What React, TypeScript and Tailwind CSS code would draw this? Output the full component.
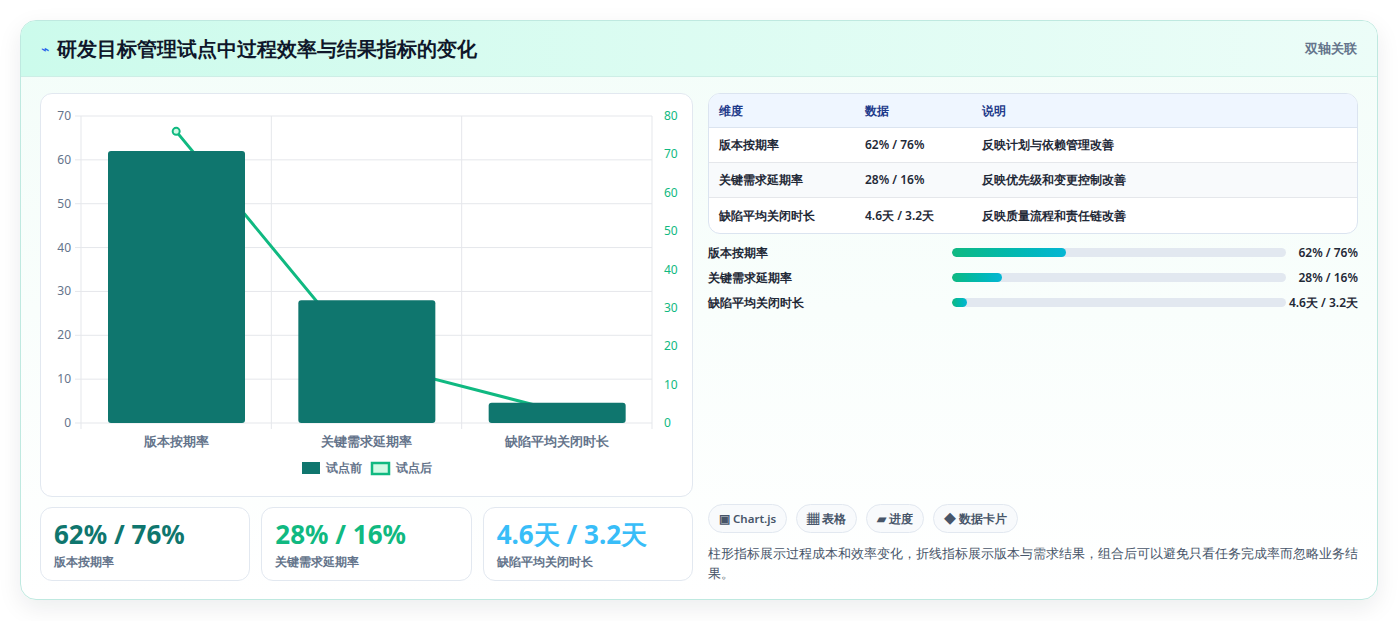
const font = "font-['Inter','Noto_Sans_CJK_SC',sans-serif]";

const rows = [
  { k: "版本按期率", v: "62% / 76%", d: "反映计划与依赖管理改善", w: "34%" },
  { k: "关键需求延期率", v: "28% / 16%", d: "反映优先级和变更控制改善", w: "15%" },
  { k: "缺陷平均关闭时长", v: "4.6天 / 3.2天", d: "反映质量流程和责任链改善", w: "4.5%" },
];

const Chart = () => {
  const x0 = 40, x1 = 611, yb = 329, yt = 22;
  const ly = (v: number) => yb - (v * (yb - yt)) / 70;
  const ry = (v: number) => yb - (v * (yb - yt)) / 80;
  const bars = [62, 28, 4.6];
  const line = [76, 16, 3.2];
  const cw = (x1 - x0) / 3;
  return (
    <svg width="652" height="403" className="block">
      {[0, 10, 20, 30, 40, 50, 60, 70].map((v) => (
        <g key={v}>
          <line x1={x0 - 6} x2={x1} y1={ly(v)} y2={ly(v)} stroke="#e5e7eb" />
          <text x={x0 - 10} y={ly(v) + 4} textAnchor="end" fontSize="12" fill="#64748b">{v}</text>
        </g>
      ))}
      {[0, 10, 20, 30, 40, 50, 60, 70, 80].map((v) => (
        <text key={v} x={x1 + 12} y={ry(v) + 4} fontSize="12" fill="#10b981">{v}</text>
      ))}
      {[0, 1, 2, 3].map((i) => (
        <line key={i} x1={x0 + cw * i} x2={x0 + cw * i} y1={yt} y2={yb + 6} stroke="#e5e7eb" />
      ))}
      <polyline
        points={line.map((v, i) => `${x0 + cw * (i + 0.5)},${ry(v)}`).join(" ")}
        fill="none" stroke="#10b981" strokeWidth="3" strokeLinejoin="round"
      />
      <circle cx={x0 + cw * 0.5} cy={ry(76)} r="3.5" fill="#d1fae5" stroke="#10b981" strokeWidth="2" />
      {bars.map((v, i) => (
        <rect key={i} x={x0 + cw * i + 27} y={ly(v)} width="137" height={yb - ly(v)} rx="3" fill="#0f766e" />
      ))}
      {rows.map((r, i) => (
        <text key={i} x={x0 + cw * (i + 0.5)} y={352} textAnchor="middle" fontSize="12.5" fontWeight="600" fill="#64748b">{r.k}</text>
      ))}
      <rect x="261" y="368" width="18" height="12" fill="#0f766e" />
      <text x="285" y="378" fontSize="12" fontWeight="600" fill="#64748b">试点前</text>
      <rect x="331" y="369" width="17" height="11" fill="#d1fae5" stroke="#10b981" strokeWidth="2.5" />
      <text x="355" y="378" fontSize="12" fontWeight="600" fill="#64748b">试点后</text>
    </svg>
  );
};

export default function App() {
  return (
    <div className={`${font} min-h-screen bg-white pt-5 px-5`}>
      <div className="w-[1358px] h-[580px] rounded-2xl border border-[#bfe9e0] bg-gradient-to-b from-[#f3fdf9] to-white shadow-[0_8px_24px_rgba(15,23,42,0.08)] overflow-hidden flex flex-col">
        <div className="h-[56px] shrink-0 flex items-center justify-between px-5 bg-gradient-to-r from-[#ccfbec] to-[#ecfdf8] border-b border-[#cdeee6]">
          <div className="flex items-center gap-2">
            <span className="text-[#2563eb] text-sm">⌁</span>
            <h1 className="text-[20px] font-semibold text-[#0f172a]">研发目标管理试点中过程效率与结果指标的变化</h1>
          </div>
          <span className="text-[13px] font-semibold text-[#64748b]">双轴关联</span>
        </div>
        <div className="flex-1 flex gap-[15px] px-[19px] pt-[16px]">
          <div className="w-[653px] flex flex-col gap-[10px]">
            <div className="h-[404px] rounded-xl border border-[#e2e8f0] bg-white overflow-hidden">
              <Chart />
            </div>
            <div className="grid grid-cols-3 gap-[11px]">
              {[
                ["62% / 76%", "版本按期率", "text-[#0f766e]"],
                ["28% / 16%", "关键需求延期率", "text-[#10b981]"],
                ["4.6天 / 3.2天", "缺陷平均关闭时长", "text-[#38bdf8]"],
              ].map(([v, l, c]) => (
                <div key={l} className="h-[74px] rounded-xl border border-[#e2e8f0] bg-white px-[13px] pt-[10px]">
                  <div className={`text-[26px] font-bold leading-[32px] ${c}`}>{v}</div>
                  <div className="text-[12px] font-semibold text-[#64748b] mt-[3px]">{l}</div>
                </div>
              ))}
            </div>
          </div>
          <div className="flex-1 flex flex-col">
            <div className="rounded-xl border border-[#dbe4f0] overflow-hidden bg-white text-[12px]">
              <div className="flex h-[34px] items-center bg-[#eff6ff] font-semibold text-[#1e3a8a] border-b border-[#dbe4f0]">
                <div className="w-[156px] pl-[10px]">维度</div>
                <div className="w-[117px]">数据</div>
                <div>说明</div>
              </div>
              {rows.map((r, i) => (
                <div key={r.k} className={`flex h-[35px] items-center font-semibold text-[#1f2937] ${i < 2 ? "border-b border-[#e5e7eb]" : ""} ${i === 1 ? "bg-[#f8fafc]" : ""}`}>
                  <div className="w-[156px] pl-[10px]">{r.k}</div>
                  <div className="w-[117px]">{r.v}</div>
                  <div>{r.d}</div>
                </div>
              ))}
            </div>
            <div className="flex flex-col gap-[8px] mt-[10px]">
              {rows.map((r) => (
                <div key={r.k} className="flex items-center h-[17px] text-[12px] font-semibold text-[#1f2937]">
                  <div className="w-[244px]">{r.k}</div>
                  <div className="flex-1 h-[9px] rounded-full bg-[#e2e8f0] overflow-hidden">
                    <div className="h-full rounded-full bg-gradient-to-r from-[#10b981] to-[#06b6d4]" style={{ width: r.w }} />
                  </div>
                  <div className="w-[72px] text-right">{r.v}</div>
                </div>
              ))}
            </div>
            <div className="mt-auto mb-[16px]">
              <div className="flex gap-[9px]">
                {["▣ Chart.js", "▦ 表格", "▰ 进度", "◆ 数据卡片"].map((t) => (
                  <span key={t} className="h-[29px] px-[10px] flex items-center rounded-full border border-[#e2e8f0] bg-[#f8fafc] text-[11.5px] font-semibold text-[#475569]">{t}</span>
                ))}
              </div>
              <p className="mt-[10px] text-[13px] leading-[20px] text-[#475569]">
                柱形指标展示过程成本和效率变化，折线指标展示版本与需求结果，组合后可以避免只看任务完成率而忽略业务结果。
              </p>
            </div>
          </div>
        </div>
      </div>
    </div>
  );
}
